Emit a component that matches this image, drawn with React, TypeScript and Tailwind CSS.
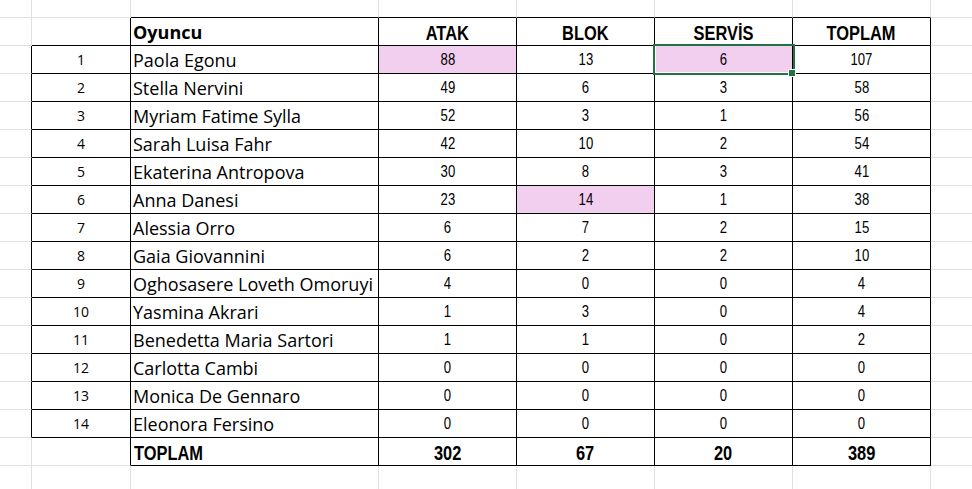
import React from "react";

type Row = [number, string, number, number, number, number];

const DATA: Row[] = [
  [1, "Paola Egonu", 88, 13, 6, 107],
  [2, "Stella Nervini", 49, 6, 3, 58],
  [3, "Myriam Fatime Sylla", 52, 3, 1, 56],
  [4, "Sarah Luisa Fahr", 42, 10, 2, 54],
  [5, "Ekaterina Antropova", 30, 8, 3, 41],
  [6, "Anna Danesi", 23, 14, 1, 38],
  [7, "Alessia Orro", 6, 7, 2, 15],
  [8, "Gaia Giovannini", 6, 2, 2, 10],
  [9, "Oghosasere Loveth Omoruyi", 4, 0, 0, 4],
  [10, "Yasmina Akrari", 1, 3, 0, 4],
  [11, "Benedetta Maria Sartori", 1, 1, 0, 2],
  [12, "Carlotta Cambi", 0, 0, 0, 0],
  [13, "Monica De Gennaro", 0, 0, 0, 0],
  [14, "Eleonora Fersino", 0, 0, 0, 0],
];

const HEADERS = ["ATAK", "BLOK", "SERVİS", "TOPLAM"];
const TOTALS = [302, 67, 20, 389];

const ROWS = 18;
const COLS = 8;

function inTable(r: number, c: number): boolean {
  if (r === 1 || r === 16) return c >= 2 && c <= 6;
  if (r >= 2 && r <= 15) return c >= 1 && c <= 6;
  return false;
}

const PINK = new Set(["2-3", "2-5", "7-4"]);

const numFont =
  "inline-block scale-x-[0.82] font-['Liberation_Sans','Arial',sans-serif]";
const textFont = "font-['Open_Sans','Noto_Sans',sans-serif]";

function Cell({ r, c }: { r: number; c: number }) {
  const right = inTable(r, c) || inTable(r, c + 1);
  const bottom = inTable(r, c) || inTable(r + 1, c);
  const rightCls = right ? "border-r-black" : "border-r-[#e0e0e0]";
  const bottomCls = bottom ? "border-b-black" : "border-b-[#e0e0e0]";
  const bg = PINK.has(`${r}-${c}`) ? "bg-[#f2ceef]" : "bg-white";
  const selected = r === 2 && c === 5;

  let content: React.ReactNode = null;
  let align = "justify-center";

  if (r === 1) {
    if (c === 2) {
      content = (
        <span className={`${textFont} text-[18px] font-bold text-black pl-[2px]`}>Oyuncu</span>
      );
      align = "justify-start";
    } else if (c >= 3 && c <= 6) {
      content = (
        <span className={`${numFont} text-[20px] font-bold text-black pt-[2px]`}>{HEADERS[c - 3]}</span>
      );
    }
  } else if (r >= 2 && r <= 15) {
    const row = DATA[r - 2];
    if (c === 1) {
      content = <span className={`${textFont} text-[14px] text-black`}>{row[0]}</span>;
    } else if (c === 2) {
      content = <span className={`${textFont} text-[18px] text-black pl-[2px]`}>{row[1]}</span>;
      align = "justify-start";
    } else if (c >= 3 && c <= 6) {
      content = <span className={`${numFont} text-[16px] text-black`}>{row[c - 1]}</span>;
    }
  } else if (r === 16) {
    if (c === 2) {
      content = (
        <span className={`${numFont} origin-left text-[20px] font-bold text-black ml-[3px] pt-[2px]`}>TOPLAM</span>
      );
      align = "justify-start";
    } else if (c >= 3 && c <= 6) {
      content = (
        <span className={`${numFont} text-[20px] font-bold text-black pt-[2px]`}>{TOTALS[c - 3]}</span>
      );
    }
  }

  return (
    <div
      className={`relative flex items-center ${align} border-r border-b ${rightCls} ${bottomCls} ${bg} whitespace-nowrap leading-none ${selected ? "z-10" : ""}`}
    >
      {content}
      {selected && (
        <div className="absolute -left-[2px] -top-[2px] w-[142px] h-[31px] border-2 border-[#217346]">
          <div className="absolute inset-0 border border-white border-r-0 border-t-0" />
          <div className="absolute left-[133px] top-[23px] w-[8px] h-[8px] bg-[#217346] border border-white" />
        </div>
      )}
    </div>
  );
}

export default function App() {
  const cells: React.ReactNode[] = [];
  for (let r = 0; r < ROWS; r++) {
    for (let c = 0; c < COLS; c++) {
      cells.push(<Cell key={`${r}-${c}`} r={r} c={c} />);
    }
  }
  return (
    <div className="w-[972px] h-[489px] overflow-hidden bg-white">
      <div className="grid grid-cols-[32px_99px_248px_138px_138px_138px_138px_80px] grid-rows-[18px_repeat(16,28px)_28px]">
        {cells}
      </div>
    </div>
  );
}
